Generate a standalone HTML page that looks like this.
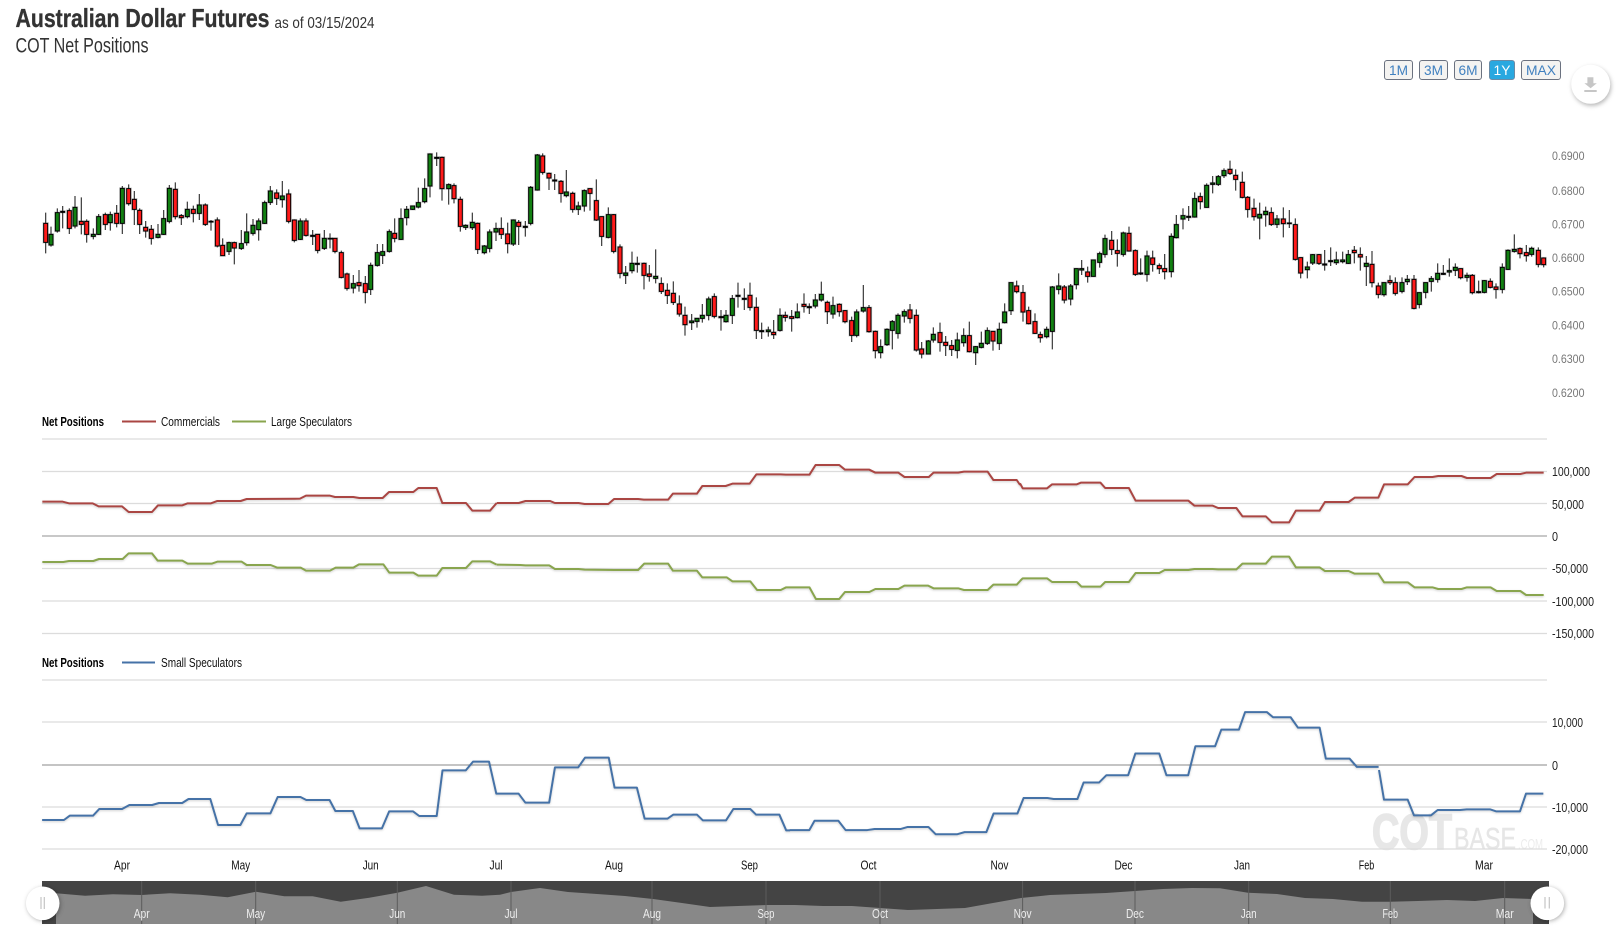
<!DOCTYPE html>
<html>
<head>
<meta charset="utf-8">
<style>
html,body{margin:0;padding:0;background:#fff;width:1622px;height:930px;overflow:hidden}
svg{display:block}
text{font-family:"Liberation Sans Narrow","Liberation Sans",sans-serif}
.hl{fill:none;stroke:#999;stroke-width:7;opacity:.45}
.wk{fill:none;stroke:#3a3a3a;stroke-width:3.6}
.gb{fill:#128012;stroke:#000;stroke-width:3}
.rb{fill:#ff1a1a;stroke:#000;stroke-width:3}
.ln{fill:none;stroke-width:2;vector-effect:non-scaling-stroke;stroke-linejoin:round}
.px{font-family:"Liberation Sans",sans-serif;font-size:12px;fill:#777}
.ax{font-size:12.5px;fill:#222}
.xl{font-size:12.5px;fill:#111;text-anchor:middle}
.nl{font-size:12.5px;fill:#eee;text-anchor:middle}
.lg{font-size:12.5px;fill:#111}
.lb{font-size:12.5px;font-weight:bold;fill:#000}
.btn{fill:#f4f3f1;stroke:#6b7280;stroke-width:1}
.bt{font-family:"Liberation Sans",sans-serif;font-size:14px;fill:#4080bf;text-anchor:middle}
</style>
</head>
<body>
<svg width="1622" height="930" viewBox="0 0 1622 930" xmlns="http://www.w3.org/2000/svg">
<defs>
<g id="W">
<path transform="translate(30,140) scale(.33333)" d="M47 218V340M63 260V320M82 205V278M98 198V265M118 205V282M135 168V265M154 172V283M170 238V308M190 265V298M206 222V285M226 218V270M241 215V272M260 195V262M277 138V282M296 133V197M313 153V255M329 205V282M347 243V293M364 255V314M384 252V295M401 210V285M418 135V250M436 127V238M454 222V255M472 185V235M490 197V247M508 162V240M526 190V258M543 240V272M562 232V322M578 295V348M597 305V345M613 305V373M634 270V330M650 220V317M669 237V287M686 235V302M704 182V252M721 138V195M740 148V195M757 123V203M776 148V250M793 238V307M811 235V300M828 235V290M848 270V315M863 282V340M883 270V330M900 280V325M915 295V340M934 332V415M951 398V452M970 405V460M987 390V455M1006 408V490M1022 368V465M1042 312V380M1058 312V372M1078 268V338M1094 235V307M1113 205V300M1130 198V256M1148 197V210M1165 143V205M1184 115V190"/>
<path transform="translate(430,140) scale(.33333)" d="M0 40V172M20 37V78M36 50V182M56 130V194M72 130V190M91 170V275M107 253V270M127 218V270M143 248V342M163 315V343M179 268V337M198 248V303M214 232V297M233 248V340M250 238V318M266 240V315M286 243V290M302 138V256M322 42V152M338 40V104M357 98V150M374 102V150M393 120V188M409 90V172M428 155V218M445 185V225M463 148V215M480 145V212M499 118V243M515 229V318M535 202V295M551 222V340M570 313V415M587 378V432M606 335V400M622 350V398M642 368V448M658 375V425M677 328V430M694 412V462M712 430V492M730 424V495M748 466V530M765 500V587M785 522V570M801 535V563M817 492V548M836 470V541M853 460V535M873 510V572M888 510V548M907 465V552M924 428V503M943 445V510M960 428V512M979 472V597M995 548V597M1015 560V590M1031 540V597M1050 505V575M1066 515V545M1085 510V575M1102 490V535M1122 460V518M1138 490V522M1156 462V505M1174 425V485M1192 482V552"/>
<path transform="translate(830,150) scale(.33333)" d="M9 440V506M28 460V500M45 480V520M65 500V576M80 478V562M100 405V488M117 465V548M136 542V625M152 568V625M171 535V588M187 510V598M204 490V566M223 478V518M240 462V520M259 478V605M275 576V625M295 570V613M310 532V578M330 518V605M347 558V618M365 570V618M382 548V625M401 535V590M418 515V607M437 588V645M454 545V595M472 532V585M489 544V602M508 518V600M524 460V520M543 398V495M560 392V430M579 405V515M596 470V523M615 490V552M631 545V578M650 530V565M667 408V598M686 370V433M703 405V460M722 402V466M739 355V418M755 330V375M773 350V398M790 330V380M809 305V353M825 254V323M845 243V315M862 268V350M880 245V320M897 230V305M916 298V378M932 325V375M951 302V395M968 302V365M988 340V372M1004 312V388M1024 250V382M1039 195V265M1059 175V238M1076 168V213M1094 127V203M1111 128V178M1130 100V173M1148 78V130M1165 75V108M1182 55V84"/>
<path transform="translate(1200,150) scale(.33333)" d="M90 32V75M107 58V122M127 65V145M143 138V203M162 146V212M179 158V268M197 170V230M214 172V228M231 195V234M250 172V262M268 180V234M286 205V332M302 322V385M322 335V385M338 312V345M357 312V345M374 300V362M392 292V348M409 305V345M428 305V340M445 300V342M463 288V340M481 292V362M499 318V408M516 303V412M535 398V445M552 397V440M570 376V405M586 382V437M606 382V430M622 375V405M642 375V478M658 427V475M677 398V445M694 378V425M713 340V398M730 345V375M748 325V380M766 340V378M782 355V388M801 368V395M817 372V433M836 392V430M853 390V430M871 385V415M888 400V446M907 340V430M924 298V360M943 253V308M960 292V325M979 285V335M995 290V320M1015 292V352M1031 322V352"/>
</g>
<g id="G">
<path transform="translate(30,140) scale(.33333)" d="M57 283h12V315h-12zM76 218h12V273h-12zM92 214h12V217h-12zM129 202h12V258h-12zM184 283h12V289h-12zM200 230h12V283h-12zM235 224h12V248h-12zM271 145h12V250h-12zM378 283h12V292h-12zM395 236h12V283h-12zM412 145h12V244h-12zM466 208h12V230h-12zM502 195h12V220h-12zM537 244h12V246h-12zM591 308h12V334h-12zM628 311h12V325h-12zM644 276h12V308h-12zM663 256h12V280h-12zM680 243h12V269h-12zM698 188h12V250h-12zM715 153h12V187h-12zM751 168h12V179h-12zM805 243h12V298h-12zM842 286h12V289h-12zM877 295h12V325h-12zM894 295h12V297h-12zM964 431h12V444h-12zM1016 376h12V448h-12zM1036 338h12V376h-12zM1052 335h12V346h-12zM1072 275h12V334h-12zM1107 236h12V298h-12zM1124 208h12V233h-12zM1142 198h12V208h-12zM1159 188h12V201h-12zM1178 146h12V185h-12z"/>
<path transform="translate(430,140) scale(.33333)" d="M-6 42h12V138h-12zM14 52h12V55h-12zM50 134h12V146h-12zM101 256h12V262h-12zM121 247h12V263h-12zM157 318h12V338h-12zM173 276h12V325h-12zM192 266h12V276h-12zM244 240h12V312h-12zM280 259h12V262h-12zM296 142h12V250h-12zM316 45h12V150h-12zM368 120h12V123h-12zM403 156h12V167h-12zM439 198h12V208h-12zM457 152h12V198h-12zM529 224h12V292h-12zM581 399h12V406h-12zM600 370h12V392h-12zM616 370h12V373h-12zM671 409h12V415h-12zM779 543h12V548h-12zM795 535h12V544h-12zM811 526h12V535h-12zM830 477h12V526h-12zM867 530h12V533h-12zM882 526h12V545h-12zM901 476h12V526h-12zM918 466h12V469h-12zM937 475h12V478h-12zM989 572h12V575h-12zM1009 570h12V575h-12zM1044 526h12V571h-12zM1096 516h12V533h-12zM1132 500h12V503h-12zM1150 480h12V498h-12zM1168 463h12V480h-12z"/>
<path transform="translate(830,150) scale(.33333)" d="M3 467h12V492h-12zM74 486h12V556h-12zM94 473h12V483h-12zM146 590h12V608h-12zM165 538h12V584h-12zM181 515h12V541h-12zM198 496h12V550h-12zM217 485h12V498h-12zM289 573h12V612h-12zM304 553h12V570h-12zM376 570h12V601h-12zM395 557h12V578h-12zM431 590h12V608h-12zM448 580h12V592h-12zM466 542h12V580h-12zM502 538h12V580h-12zM518 486h12V518h-12zM537 398h12V482h-12zM644 538h12V560h-12zM661 411h12V544h-12zM680 408h12V418h-12zM716 408h12V447h-12zM733 356h12V404h-12zM749 356h12V360h-12zM784 330h12V379h-12zM803 311h12V337h-12zM819 266h12V313h-12zM874 249h12V313h-12zM926 369h12V372h-12zM945 318h12V373h-12zM1018 259h12V365h-12zM1033 224h12V263h-12zM1053 197h12V207h-12zM1070 199h12V202h-12zM1088 146h12V201h-12zM1124 106h12V172h-12zM1142 99h12V103h-12zM1159 80h12V103h-12zM1176 62h12V77h-12z"/>
<path transform="translate(1200,150) scale(.33333)" d="M173 193h12V204h-12zM191 184h12V194h-12zM225 207h12V223h-12zM316 351h12V359h-12zM332 314h12V339h-12zM368 342h12V345h-12zM386 332h12V335h-12zM403 330h12V338h-12zM422 330h12V335h-12zM439 314h12V340h-12zM493 340h12V349h-12zM546 398h12V434h-12zM600 398h12V424h-12zM616 388h12V395h-12zM652 428h12V463h-12zM671 398h12V427h-12zM688 386h12V394h-12zM707 370h12V388h-12zM724 370h12V373h-12zM742 362h12V366h-12zM760 352h12V361h-12zM795 376h12V382h-12zM830 425h12V428h-12zM847 392h12V427h-12zM901 352h12V418h-12zM918 301h12V358h-12zM937 298h12V304h-12zM989 295h12V313h-12z"/>
</g>
<g id="R">
<path transform="translate(30,140) scale(.33333)" d="M41 250h12V307h-12zM112 212h12V265h-12zM148 244h12V253h-12zM164 244h12V283h-12zM220 224h12V253h-12zM254 220h12V250h-12zM290 146h12V191h-12zM307 178h12V208h-12zM323 211h12V253h-12zM341 262h12V273h-12zM358 268h12V295h-12zM430 148h12V230h-12zM448 227h12V233h-12zM484 208h12V220h-12zM520 195h12V253h-12zM556 240h12V318h-12zM572 316h12V347h-12zM607 308h12V324h-12zM734 159h12V175h-12zM770 162h12V244h-12zM787 240h12V301h-12zM822 243h12V286h-12zM857 283h12V331h-12zM909 295h12V334h-12zM928 338h12V412h-12zM945 402h12V445h-12zM981 428h12V437h-12zM1000 431h12V457h-12zM1088 280h12V295h-12z"/>
<path transform="translate(430,140) scale(.33333)" d="M30 52h12V146h-12zM66 137h12V176h-12zM85 178h12V259h-12zM137 250h12V328h-12zM208 266h12V283h-12zM227 282h12V311h-12zM260 247h12V259h-12zM332 48h12V97h-12zM351 100h12V114h-12zM387 124h12V160h-12zM422 160h12V208h-12zM474 146h12V160h-12zM493 182h12V240h-12zM509 230h12V289h-12zM545 224h12V334h-12zM564 321h12V400h-12zM636 370h12V406h-12zM652 402h12V409h-12zM688 431h12V454h-12zM706 451h12V466h-12zM724 460h12V487h-12zM742 492h12V522h-12zM759 526h12V554h-12zM847 470h12V529h-12zM954 466h12V502h-12zM973 502h12V571h-12zM1025 577h12V584h-12zM1060 526h12V532h-12zM1079 530h12V535h-12zM1116 493h12V499h-12zM1186 487h12V515h-12z"/>
<path transform="translate(830,150) scale(.33333)" d="M22 463h12V485h-12zM39 482h12V515h-12zM59 512h12V556h-12zM111 473h12V545h-12zM130 544h12V602h-12zM234 480h12V505h-12zM253 496h12V600h-12zM269 597h12V612h-12zM324 548h12V577h-12zM341 577h12V586h-12zM359 587h12V598h-12zM412 557h12V605h-12zM483 544h12V573h-12zM554 408h12V425h-12zM573 428h12V486h-12zM590 482h12V521h-12zM609 515h12V550h-12zM625 554h12V563h-12zM697 411h12V450h-12zM767 366h12V379h-12zM839 271h12V298h-12zM856 302h12V310h-12zM891 250h12V303h-12zM910 302h12V373h-12zM962 324h12V343h-12zM982 347h12V356h-12zM998 356h12V365h-12zM1105 140h12V155h-12z"/>
<path transform="translate(1200,150) scale(.33333)" d="M84 58h12V70h-12zM101 76h12V88h-12zM121 97h12V142h-12zM137 142h12V178h-12zM156 175h12V200h-12zM208 188h12V223h-12zM244 207h12V221h-12zM262 219h12V221h-12zM280 224h12V328h-12zM296 323h12V369h-12zM351 314h12V340h-12zM457 301h12V308h-12zM475 314h12V321h-12zM510 343h12V398h-12zM529 408h12V433h-12zM564 392h12V398h-12zM580 398h12V430h-12zM636 388h12V475h-12zM776 356h12V383h-12zM811 376h12V428h-12zM865 394h12V412h-12zM882 411h12V418h-12zM954 296h12V311h-12zM973 308h12V317h-12zM1009 301h12V343h-12zM1025 324h12V344h-12z"/>
</g>
</defs>

<!-- Titles -->
<text x="15.5" y="27" font-size="26" font-weight="bold" fill="#333" stroke="#333" stroke-width=".35" textLength="254" lengthAdjust="spacingAndGlyphs">Australian Dollar Futures</text>
<text x="274.5" y="28" font-size="16" fill="#333" textLength="100" lengthAdjust="spacingAndGlyphs">as of 03/15/2024</text>
<text x="15.5" y="52.5" font-size="21" fill="#333" textLength="133" lengthAdjust="spacingAndGlyphs">COT Net Positions</text>

<!-- Range buttons -->
<rect class="btn" x="1384.5" y="60.5" width="28" height="19" rx="2.5"/>
<rect class="btn" x="1419.5" y="60.5" width="28" height="19" rx="2.5"/>
<rect class="btn" x="1454.5" y="60.5" width="27" height="19" rx="2.5"/>
<rect x="1489.5" y="60.5" width="25" height="19" rx="2.5" fill="#29a8e0" stroke="#6b8ba5"/>
<rect class="btn" x="1521.5" y="60.5" width="39" height="19" rx="2.5"/>
<text class="bt" x="1398.5" y="75" textLength="19" lengthAdjust="spacingAndGlyphs">1M</text>
<text class="bt" x="1433.5" y="75" textLength="19" lengthAdjust="spacingAndGlyphs">3M</text>
<text class="bt" x="1468" y="75" textLength="19" lengthAdjust="spacingAndGlyphs">6M</text>
<text class="bt" x="1502" y="75" textLength="17" lengthAdjust="spacingAndGlyphs" style="fill:#fff">1Y</text>
<text class="bt" x="1541" y="75" textLength="30" lengthAdjust="spacingAndGlyphs">MAX</text>

<!-- Download button -->
<circle cx="1590.7" cy="84.3" r="19.5" fill="#fff" style="filter:drop-shadow(1px 2px 2px rgba(0,0,0,.28))"/>
<path d="M1587.4 77.3h6v6h3.4l-6.2 5-6.2-5h3z" fill="#c6c6c6"/>
<rect x="1584.3" y="90" width="12.4" height="2" fill="#c6c6c6"/>

<!-- Price axis -->
<g class="px">
<text x="1552" y="160" textLength="32.5" lengthAdjust="spacingAndGlyphs">0.6900</text>
<text x="1552" y="195" textLength="32.5" lengthAdjust="spacingAndGlyphs">0.6800</text>
<text x="1552" y="228.5" textLength="32.5" lengthAdjust="spacingAndGlyphs">0.6700</text>
<text x="1552" y="262" textLength="32.5" lengthAdjust="spacingAndGlyphs">0.6600</text>
<text x="1552" y="295.5" textLength="32.5" lengthAdjust="spacingAndGlyphs">0.6500</text>
<text x="1552" y="329.5" textLength="32.5" lengthAdjust="spacingAndGlyphs">0.6400</text>
<text x="1552" y="363" textLength="32.5" lengthAdjust="spacingAndGlyphs">0.6300</text>
<text x="1552" y="397" textLength="32.5" lengthAdjust="spacingAndGlyphs">0.6200</text>
</g>

<!-- Candles -->
<use href="#G" class="hl"/>
<use href="#R" class="hl"/>
<use href="#W" class="wk"/>
<use href="#G" class="gb"/>
<use href="#R" class="rb"/>

<!-- Legend 1 -->
<text class="lb" x="42" y="426" textLength="62" lengthAdjust="spacingAndGlyphs">Net Positions</text>
<path d="M122 421.5H156" stroke="#aa4643" stroke-width="2" fill="none"/>
<text class="lg" x="161" y="426" textLength="59" lengthAdjust="spacingAndGlyphs">Commercials</text>
<path d="M232 421.5H266" stroke="#89a54e" stroke-width="2" fill="none"/>
<text class="lg" x="271" y="426" textLength="81" lengthAdjust="spacingAndGlyphs">Large Speculators</text>

<!-- Grid 1 -->
<path d="M42 439H1547M42 471.5H1547M42 503.5H1547M42 568.5H1547M42 601H1547M42 633.5H1547" stroke="#dcdcdc" stroke-width="1.2" fill="none"/>
<path d="M42 536H1547" stroke="#a8a8a8" stroke-width="1.3" fill="none"/>

<!-- Net position lines -->
<g style="filter:drop-shadow(0 1px 1px rgba(0,0,0,.18))">
<polyline class="ln" stroke="#aa4643" transform="translate(0,400) scale(.33333)" points="127,305 188,305 207,310 278,310 296,319 366,319 386,336 456,336 474,316 547,316 563,310 633,310 652,303 722,303 740,297 900,296 918,287 990,287 1005,291 1060,291 1078,294 1148,294 1167,276 1240,276 1255,264 1310,264 1327,309 1398,309 1417,332 1470,332 1490,309"/>
<polyline class="ln" stroke="#aa4643" transform="translate(490,455) scale(.33807,.33333)" points="20,144 85,144 105,138 178,138 192,144 262,144 280,147 350,147 367,132 438,132 455,134 527,134 541,116 612,116 628,93 697,93 717,86 768,86 788,58 860,58 875,59 945,59 963,30 1033,30 1050,44 1122,44 1140,53 1208,53 1226,66 1298,66 1312,53 1385,53 1402,50 1472,50 1489,75 1558,75 1568,90"/>
<polyline class="ln" stroke="#aa4643" transform="translate(1020,455) scale(.33807,.33333)" points="0,85 8,100 80,100 95,88 168,88 180,83 238,83 252,99 322,99 342,137 498,137 516,152 570,152 586,159 640,159 658,184 727,184 745,202 796,202 816,167 886,167 902,141 972,141 990,128 1060,128 1077,88 1147,88 1167,66 1220,66 1237,63 1306,63 1322,69 1392,69 1410,57 1480,57 1497,53 1549,53"/>
<polyline class="ln" stroke="#89a54e" transform="translate(0,400) scale(.33333)" points="127,486 190,486 207,483 280,483 297,477 368,477 386,460 456,460 473,482 547,482 563,491 635,491 652,485 725,485 740,495 812,495 832,503 902,503 918,512 990,512 1007,503 1060,503 1077,493 1150,493 1168,518 1240,518 1255,527 1310,527 1327,504 1398,504 1417,484 1470,484 1490,494"/>
<polyline class="ln" stroke="#89a54e" transform="translate(490,455) scale(.33807,.33333)" points="20,329 90,330 105,331 175,331 192,342 262,342 280,344 368,345 438,345 456,326 527,326 541,347 612,347 628,367 700,367 717,379 770,379 790,405 860,405 876,397 945,397 964,432 1033,432 1050,411 1122,411 1140,402 1208,402 1226,392 1296,392 1312,400 1385,400 1402,405 1472,405 1489,389 1558,389 1568,378"/>
<polyline class="ln" stroke="#89a54e" transform="translate(1020,455) scale(.33807,.33333)" points="0,378 8,370 80,370 95,381 168,381 182,395 238,395 252,381 322,381 342,354 412,354 428,345 498,345 516,342 570,342 586,343 640,343 658,326 727,326 745,305 796,305 816,337 886,337 902,348 972,348 990,356 1060,356 1077,382 1147,382 1167,397 1220,397 1237,402 1306,402 1322,397 1392,397 1410,408 1480,408 1497,420 1549,420"/>
</g>

<!-- Axis 1 -->
<g class="ax">
<text x="1552" y="476" textLength="38" lengthAdjust="spacingAndGlyphs">100,000</text>
<text x="1552" y="509" textLength="32" lengthAdjust="spacingAndGlyphs">50,000</text>
<text x="1552" y="541" textLength="6" lengthAdjust="spacingAndGlyphs">0</text>
<text x="1552" y="573" textLength="36" lengthAdjust="spacingAndGlyphs">-50,000</text>
<text x="1552" y="606" textLength="42" lengthAdjust="spacingAndGlyphs">-100,000</text>
<text x="1552" y="638" textLength="42" lengthAdjust="spacingAndGlyphs">-150,000</text>
</g>

<!-- Legend 2 -->
<text class="lb" x="42" y="667" textLength="62" lengthAdjust="spacingAndGlyphs">Net Positions</text>
<path d="M122 662.5H155" stroke="#4572a7" stroke-width="2" fill="none"/>
<text class="lg" x="161" y="667" textLength="81" lengthAdjust="spacingAndGlyphs">Small Speculators</text>

<!-- Watermark -->
<text x="1372" y="849" style="font-family:'Liberation Sans',sans-serif" font-size="50" font-weight="bold" fill="#e7e7e7" stroke="#e7e7e7" stroke-width="1.6" textLength="80" lengthAdjust="spacingAndGlyphs">COT</text>
<text x="1454" y="849" style="font-family:'Liberation Sans',sans-serif" font-size="31" fill="#e6e6e6" stroke="#e6e6e6" stroke-width=".4" textLength="62" lengthAdjust="spacingAndGlyphs">BASE</text>
<text x="1518" y="849" style="font-family:'Liberation Sans',sans-serif" font-size="15" fill="#ececec" textLength="25" lengthAdjust="spacingAndGlyphs">.COM</text>

<!-- Grid 2 -->
<path d="M42 680H1547M42 722H1547M42 807H1547M42 849H1547" stroke="#dcdcdc" stroke-width="1.2" fill="none"/>
<path d="M42 765H1547" stroke="#a0a0a0" stroke-width="1.3" fill="none"/>

<!-- Small speculators -->
<g style="filter:drop-shadow(0 1px 1px rgba(0,0,0,.18))">
<polyline class="ln" stroke="#4572a7" transform="translate(30,650) scale(.48473,.33333)" points="25,510 70,510 82,497 130,497 143,477 190,477 205,465 252,465 266,459 314,459 327,447 372,447 388,525 434,525 447,490 496,490 511,441 558,441 570,450 618,450 630,483 666,483 680,535 726,535 741,484 790,484 803,498 839,498 851,361 899,361 914,335 947,335 962,431 1008,431 1022,458 1071,458 1083,352 1131,352 1145,323 1194,323 1206,413 1252,413 1268,506 1315,506 1327,494 1376,494 1388,511 1436,511 1451,477 1486,477 1498,494 1546,494 1560,541 1568,541"/>
<polyline class="ln" stroke="#4572a7" transform="scale(1.035)" points="763,802 782,802 787,793 810,793 817,802 838,802 845,801 870,801 877,799 897,799 904,806 925,806 932,804 953,804 960,786 983,786 989,771 1012,771 1018,772 1041,772 1047,756 1062,756 1069,749 1090,749 1097,728 1120,728 1127,749 1148,749 1155,721 1174,721 1180,705 1197,705 1203,688 1224,688 1230,693 1247,693 1254,703 1275,703 1281,733 1304,733 1311,741 1332,741"/>
<polyline class="ln" stroke="#4572a7" transform="translate(1200,770) scale(.33333)" points="537,0 552,89 623,89 642,136 693,136 713,120 780,120 800,118 870,118 888,124 960,124 978,71 1030,71"/>
</g>

<!-- Axis 2 -->
<g class="ax">
<text x="1552" y="727" textLength="31" lengthAdjust="spacingAndGlyphs">10,000</text>
<text x="1552" y="770" textLength="6" lengthAdjust="spacingAndGlyphs">0</text>
<text x="1552" y="812" textLength="36" lengthAdjust="spacingAndGlyphs">-10,000</text>
<text x="1552" y="854" textLength="36" lengthAdjust="spacingAndGlyphs">-20,000</text>
</g>

<!-- X axis -->
<text class="xl" x="122" y="869.5" textLength="16" lengthAdjust="spacingAndGlyphs">Apr</text>
<text class="xl" x="240.7" y="869.5" textLength="19" lengthAdjust="spacingAndGlyphs">May</text>
<text class="xl" x="370.7" y="869.5" textLength="16" lengthAdjust="spacingAndGlyphs">Jun</text>
<text class="xl" x="496" y="869.5" textLength="13" lengthAdjust="spacingAndGlyphs">Jul</text>
<text class="xl" x="614" y="869.5" textLength="18" lengthAdjust="spacingAndGlyphs">Aug</text>
<text class="xl" x="749.5" y="869.5" textLength="17" lengthAdjust="spacingAndGlyphs">Sep</text>
<text class="xl" x="868.5" y="869.5" textLength="16" lengthAdjust="spacingAndGlyphs">Oct</text>
<text class="xl" x="999.5" y="869.5" textLength="18" lengthAdjust="spacingAndGlyphs">Nov</text>
<text class="xl" x="1123.5" y="869.5" textLength="18" lengthAdjust="spacingAndGlyphs">Dec</text>
<text class="xl" x="1242" y="869.5" textLength="16" lengthAdjust="spacingAndGlyphs">Jan</text>
<text class="xl" x="1366.5" y="869.5" textLength="15.5" lengthAdjust="spacingAndGlyphs">Feb</text>
<text class="xl" x="1484" y="869.5" textLength="18" lengthAdjust="spacingAndGlyphs">Mar</text>

<!-- Navigator -->
<rect x="42" y="881" width="1507" height="43" fill="#444"/>
<polygon fill="#888" points="56,924 56,893.3 85,895.7 113,894.3 141.7,895 170,893.3 200,894.7 227.7,897.3 256,891.7 284.3,896.3 312.7,896.3 340.7,901.7 369.3,897.7 397.3,892.7 426,886 454,894.7 482,895.7 500,894.7 511,892 540,888 568,892 597,894 625,896 653,899 682,903 710,907 738,906 767,905 795,905 823,906 852,906 880,908 908,910 937,909 965,908 993,903 1021,898 1050,895 1078,894 1106,893 1135,891 1163,889 1192,888 1220,888.3 1248,892.7 1277,894 1305,898 1333,899 1362,901.7 1390,901.7 1418,901 1447,900 1475,901 1503,898 1533,899 1533,924"/>
<path d="M141.7 881V924M255.7 881V924M397.3 881V924M511 881V924M652 881V924M766 881V924M880 881V924M1022.6 881V924M1135 881V924M1248.7 881V924M1390.3 881V924M1504.7 881V924" stroke="#5c5c5c" stroke-width="1" fill="none"/>
<text class="nl" x="141.7" y="918" textLength="16" lengthAdjust="spacingAndGlyphs">Apr</text>
<text class="nl" x="255.7" y="918" textLength="19" lengthAdjust="spacingAndGlyphs">May</text>
<text class="nl" x="397.3" y="918" textLength="16" lengthAdjust="spacingAndGlyphs">Jun</text>
<text class="nl" x="511" y="918" textLength="13" lengthAdjust="spacingAndGlyphs">Jul</text>
<text class="nl" x="652" y="918" textLength="18" lengthAdjust="spacingAndGlyphs">Aug</text>
<text class="nl" x="766" y="918" textLength="17" lengthAdjust="spacingAndGlyphs">Sep</text>
<text class="nl" x="880" y="918" textLength="16" lengthAdjust="spacingAndGlyphs">Oct</text>
<text class="nl" x="1022.6" y="918" textLength="18" lengthAdjust="spacingAndGlyphs">Nov</text>
<text class="nl" x="1135" y="918" textLength="18" lengthAdjust="spacingAndGlyphs">Dec</text>
<text class="nl" x="1248.7" y="918" textLength="16" lengthAdjust="spacingAndGlyphs">Jan</text>
<text class="nl" x="1390.3" y="918" textLength="15.5" lengthAdjust="spacingAndGlyphs">Feb</text>
<text class="nl" x="1504.7" y="918" textLength="18" lengthAdjust="spacingAndGlyphs">Mar</text>

<!-- Navigator handles -->
<g style="filter:drop-shadow(1px 1px 2px rgba(0,0,0,.3))" fill="#fff">
<circle cx="42.7" cy="903.3" r="16.8"/>
<circle cx="1547.3" cy="903.3" r="16.8"/>
</g>
<path d="M41 897V909M44.3 897V909M1545 897V908.5M1549.3 897V908.5" stroke="#c4c4c4" stroke-width="1.2" fill="none"/>
</svg>
</body>
</html>
